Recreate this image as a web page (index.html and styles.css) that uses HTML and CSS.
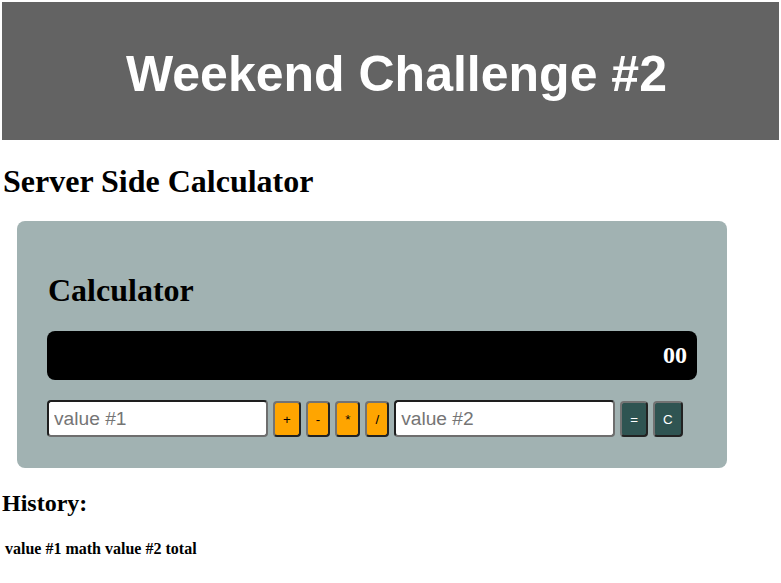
FILE: index.html
```html
<!DOCTYPE html>
<html>
<head>
<meta charset="utf-8">
<link rel="stylesheet" href="styles.css">
</head>
<body>
<header class="banner">
  <div class="banner-title">Weekend Challenge #2</div>
</header>
<h1 class="page-title">Server Side Calculator</h1>
<section class="calc">
  <h1 class="calc-title">Calculator</h1>
  <div class="display">00</div>
  <div class="controls">
    <input class="value-input" type="text" placeholder="value #1">
    <button class="btn op">+</button>
    <button class="btn op">-</button>
    <button class="btn op">*</button>
    <button class="btn op">/</button>
    <input class="value-input" type="text" placeholder="value #2">
    <button class="btn act">=</button>
    <button class="btn act">C</button>
  </div>
</section>
<h2 class="history-title">History:</h2>
<table class="history">
  <thead>
    <tr><th>value #1</th><th>math</th><th>value #2</th><th>total</th></tr>
  </thead>
</table>
</body>
</html>
```
FILE: styles.css
```css
html, body {
  background: #ffffff;
}
body {
  margin: 2px;
  font-family: "Liberation Serif", "Times New Roman", serif;
  color: #000;
}
.banner {
  background: #636363;
  height: 138px;
  display: flex;
  align-items: center;
  justify-content: center;
}
.banner-title {
  font-family: "Liberation Sans", Arial, sans-serif;
  font-weight: bold;
  font-size: 50px;
  color: #ffffff;
  padding-top: 6px;
  padding-left: 12px;
}
.page-title {
  font-size: 32px;
  margin: 23px 0 21px 1px;
}
.calc {
  background: #a1b2b2;
  border-radius: 8px;
  width: 650px;
  padding: 30px 30px 31px 30px;
  margin: 0 0 0 15px;
}
.calc-title {
  font-size: 32px;
  margin: 21px 0 22px 1px;
}
.display {
  background: #000;
  color: #fff;
  border-radius: 8px;
  height: 49px;
  display: flex;
  align-items: center;
  justify-content: flex-end;
  padding-right: 10px;
  font-weight: bold;
  font-size: 24px;
}
.controls {
  margin-top: 20px;
  display: flex;
  align-items: center;
  gap: 5px;
}
.value-input {
  box-sizing: border-box;
  width: 221px;
  height: 37px;
  margin: 0;
  border: 2px solid;
  border-color: #1e1e1e #6e6e6e #6e6e6e #1e1e1e;
  border-radius: 4px;
  padding: 0 5px;
  font-family: "Liberation Sans", Arial, sans-serif;
  font-size: 19.2px;
  background: #fff;
  outline: none;
}
.value-input::placeholder {
  color: #757575;
}
.btn {
  box-sizing: border-box;
  height: 36px;
  margin: 1px 0 0 0;
  padding: 0 8px;
  border: 2px solid;
  border-color: #737373 #222 #222 #737373;
  border-radius: 4px;
  font-family: "Liberation Sans", Arial, sans-serif;
  font-size: 13.33px;
}
.op {
  background: #ffa500;
  color: #000;
}
.act {
  background: #2f5452;
  color: #fff;
}
.history-title {
  font-size: 24px;
  margin: 22px 0 20px 0;
}
.history {
  border-spacing: 2px;
}
.history th {
  padding: 1px;
  font-size: 16px;
  font-weight: bold;
}
```
